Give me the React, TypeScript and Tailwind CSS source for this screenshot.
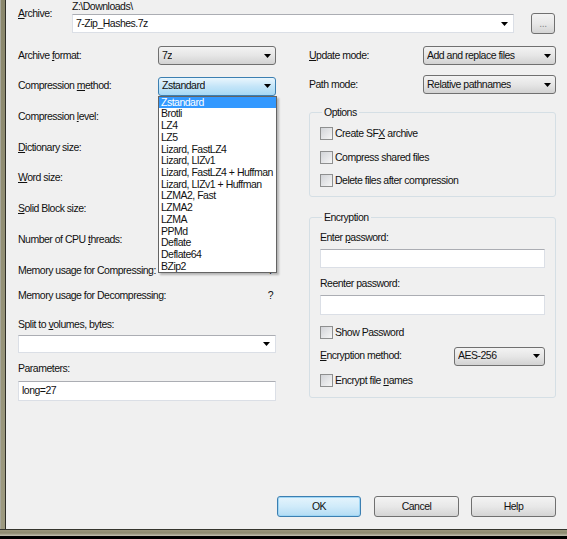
import React from 'react';

const methods = [
  'Zstandard',
  'Brotli',
  'LZ4',
  'LZ5',
  'Lizard, FastLZ4',
  'Lizard, LIZv1',
  'Lizard, FastLZ4 + Huffman',
  'Lizard, LIZv1 + Huffman',
  'LZMA2, Fast',
  'LZMA2',
  'LZMA',
  'PPMd',
  'Deflate',
  'Deflate64',
  'BZip2',
];

const Arrow = () => (
  <svg width="7" height="4" viewBox="0 0 7 4" className="shrink-0">
    <path d="M0 0H7L3.5 4Z" fill="#000" />
  </svg>
);

// read-only combo box with the Win7 grey gradient
const Combo = ({ value, className = '', focused = false }: { value: string; className?: string; focused?: boolean }) => (
  <div
    className={`flex h-[19px] items-center justify-between rounded-[3px] border pl-[3px] pr-[4px] ${
      focused
        ? 'border-[#3c7fb1] bg-gradient-to-b from-[#eaf6fd] via-[#c4e5f8] to-[#a7d9f5]'
        : 'border-[#707070] bg-gradient-to-b from-[#f3f3f3] via-[#e6e6e6] to-[#d2d2d2]'
    } ${className}`}
  >
    <span className="truncate">{value}</span>
    <Arrow />
  </div>
);

// editable combo: white field, arrow only
const EditCombo = ({ value = '', className = '' }: { value?: string; className?: string }) => (
  <div
    className={`flex items-center justify-between border border-[#dbdfe6] border-t-[#abadb3] bg-white pl-[3px] pr-[5px] ${className}`}
  >
    <span>{value}</span>
    <Arrow />
  </div>
);

const Edit = ({ value = '', className = '' }: { value?: string; className?: string }) => (
  <div className={`flex items-center border border-[#dbdfe6] border-t-[#abadb3] bg-white pl-[3px] ${className}`}>
    {value}
  </div>
);

const Check = ({ children }: { children: React.ReactNode }) => (
  <div className="flex h-[13px] items-center">
    <div className="h-[13px] w-[13px] border border-[#8e8f8f] bg-gradient-to-br from-[#d2d4d8] to-[#f6f6f6]" />
    <span className="ml-[2px] leading-[13px]">{children}</span>
  </div>
);

const Btn = ({ children, className = '', primary = false }: { children: React.ReactNode; className?: string; primary?: boolean }) => (
  <div
    className={`flex h-[21px] items-center justify-center rounded-[3px] border ${
      primary
        ? 'border-[#3c7fb1] bg-gradient-to-b from-[#e5f4fc] via-[#d0ebfa] to-[#b3dcf4] shadow-[inset_0_0_0_1px_#9fd6f5]'
        : 'border-[#707070] bg-gradient-to-b from-[#f3f3f3] via-[#e8e8e8] to-[#d4d4d4]'
    } ${className}`}
  >
    {children}
  </div>
);

const Row = ({ children }: { children: React.ReactNode }) => (
  <div className="flex h-[19px] items-center">{children}</div>
);

export default function App() {
  return (
    <div className="flex h-[539px] w-[567px] flex-col overflow-hidden font-['Liberation_Sans',Arial,sans-serif] text-[10.5px] tracking-[-0.5px] text-[#111]">
      <div className="flex min-h-0 flex-1">
        {/* window frame, left */}
        <div className="w-[6px] shrink-0 border-l border-r border-l-[#a8a89c] border-r-[#2e2e28] bg-gradient-to-b from-[#8a876c] to-[#9d9a80]" />

        <div className="flex flex-1 flex-col bg-[#f0f0f0] pl-[12px]">
          {/* archive path */}
          <div className="flex h-[33px]">
            <div className="w-[54px] pt-[7px] leading-[12px]">
              <span className="underline">A</span>rchive:
            </div>
            <div>
              <div className="h-[12px] leading-[12px]">Z:\Downloads\</div>
              <div className="mt-[2px] flex items-start">
                <EditCombo value="7-Zip_Hashes.7z" className="h-[19px] w-[442px]" />
                <Btn className="-mt-[1px] ml-[17px] w-[24px] text-[#8a8a8a]">...</Btn>
              </div>
            </div>
          </div>

          <div className="mt-[13px] flex">
            {/* left column */}
            <div className="flex w-[258px] flex-col">
              <div className="flex flex-col gap-[11.67px]">
                <Row>
                  <span className="w-[140px]">
                    Archive <span className="underline">f</span>ormat:
                  </span>
                  <Combo value="7z" className="w-[118px]" />
                </Row>
                <Row>
                  <span className="w-[140px]">
                    Compression <span className="underline">m</span>ethod:
                  </span>
                  <div className="relative">
                    <Combo value="Zstandard" focused className="w-[118px]" />
                    {/* open drop-down list */}
                    <div className="absolute left-0 top-full z-10 w-[119px] border border-[#646464] bg-white shadow-[2px_2px_2px_rgba(0,0,0,0.25)]">
                      {methods.map((m, i) => (
                        <div
                          key={m}
                          className={`h-[11.73px] whitespace-nowrap pl-[2px] leading-[11.73px] ${
                            i === 0 ? 'bg-[#3399ff] text-white' : ''
                          }`}
                        >
                          {m}
                        </div>
                      ))}
                    </div>
                  </div>
                </Row>
                <Row>
                  <span>
                    Compression <span className="underline">l</span>evel:
                  </span>
                </Row>
                <Row>
                  <span>
                    <span className="underline">D</span>ictionary size:
                  </span>
                </Row>
                <Row>
                  <span>
                    <span className="underline">W</span>ord size:
                  </span>
                </Row>
                <Row>
                  <span>
                    <span className="underline">S</span>olid Block size:
                  </span>
                </Row>
                <Row>
                  <span>
                    Number of CPU <span className="underline">t</span>hreads:
                  </span>
                </Row>
              </div>

              <div className="mt-[15px] flex h-[14px] items-center justify-between pr-[3px]">
                <span>Memory usage for Compressing:</span>
                <span>?</span>
              </div>
              <div className="mt-[11px] flex h-[14px] items-center justify-between pr-[3px]">
                <span>Memory usage for Decompressing:</span>
                <span>?</span>
              </div>

              <div className="mt-[15px] flex h-[14px] items-center">
                <span>
                  Split to <span className="underline">v</span>olumes, bytes:
                </span>
              </div>
              <EditCombo className="mt-[3px] h-[18px] w-[258px]" />

              <div className="mt-[9px] flex h-[14px] items-center">Parameters:</div>
              <Edit value="long=27" className="mt-[5px] h-[20px] w-[258px]" />
            </div>

            {/* right column */}
            <div className="ml-[33px] flex w-[247px] flex-col">
              <Row>
                <span className="w-[114px]">
                  <span className="underline">U</span>pdate mode:
                </span>
                <Combo value="Add and replace files" className="w-[133px]" />
              </Row>
              <div className="mt-[10px]">
                <Row>
                  <span className="w-[114px]">Path mode:</span>
                  <Combo value="Relative pathnames" className="w-[133px]" />
                </Row>
              </div>

              <fieldset className="mt-[11px] rounded-[3px] border border-[#d5dfe5] pb-[9px] pl-[10px]">
                <legend className="ml-[2px] px-[2px] leading-[14px]">Options</legend>
                <div className="mt-[8px] flex flex-col gap-[10.5px]">
                  <Check>
                    Create SF<span className="underline">X</span> archive
                  </Check>
                  <Check>Compress shared files</Check>
                  <Check>Delete files after compression</Check>
                </div>
              </fieldset>

              <fieldset className="mt-[13px] rounded-[3px] border border-[#d5dfe5] pb-[10px] pl-[10px] pr-[10px]">
                <legend className="ml-[2px] px-[2px] leading-[14px]">Encryption</legend>
                <div className="mt-[7px] flex h-[14px] items-center">
                  <span>
                    Enter <span className="underline">p</span>assword:
                  </span>
                </div>
                <Edit className="mt-[4px] h-[19px]" />
                <div className="mt-[9px] flex h-[14px] items-center">Reenter password:</div>
                <Edit className="mt-[4px] h-[20px]" />
                <div className="mt-[10.5px]">
                  <Check>Show Password</Check>
                </div>
                <div className="mt-[8px] flex h-[19px] items-center justify-between">
                  <span>
                    <span className="underline">E</span>ncryption method:
                  </span>
                  <Combo value="AES-256" className="w-[91px]" />
                </div>
                <div className="mt-[8px]">
                  <Check>
                    Encrypt file <span className="underline">n</span>ames
                  </Check>
                </div>
              </fieldset>
            </div>
          </div>

          {/* dialog buttons */}
          <div className="mb-[12px] mt-auto flex justify-end pr-[11px]">
            <Btn primary className="w-[84px]">
              OK
            </Btn>
            <Btn className="ml-[13px] w-[85px]">Cancel</Btn>
            <Btn className="ml-[12px] w-[85px]">Help</Btn>
          </div>
        </div>
      </div>

      {/* window frame, bottom */}
      <div className="h-[10px] shrink-0 border-b-[3px] border-t border-b-black border-t-[#35352e] bg-gradient-to-b from-[#9a977c] via-[#8d8a70] to-[#c4c2b2]" />
    </div>
  );
}
